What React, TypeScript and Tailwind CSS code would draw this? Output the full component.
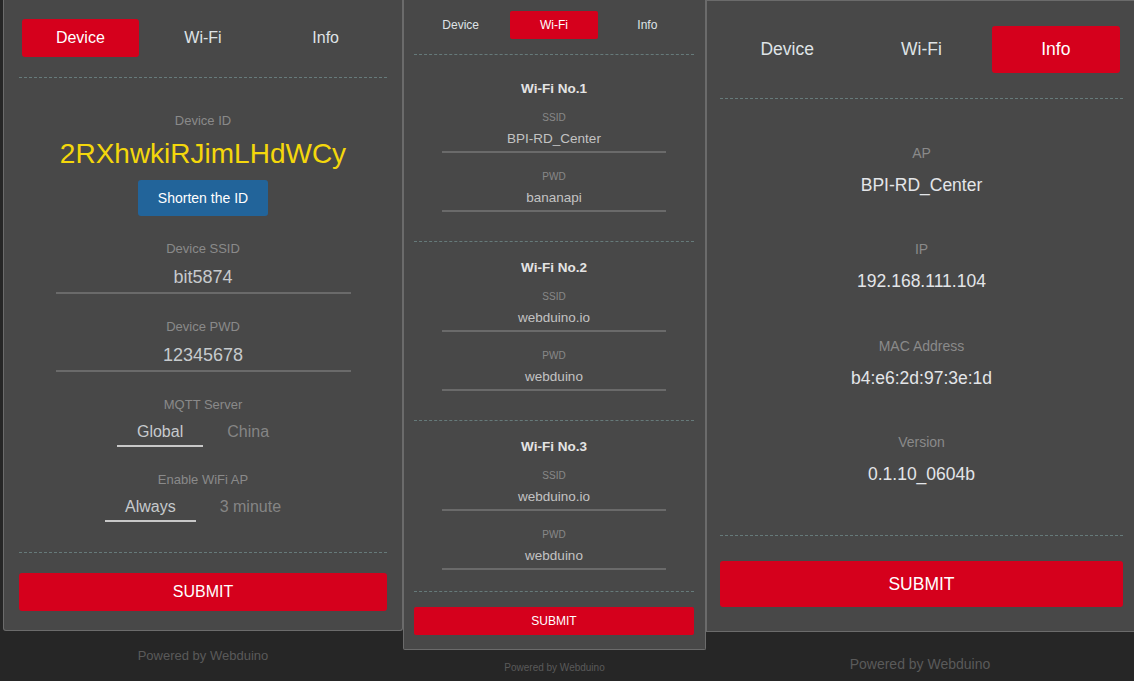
const tabs = ['Device', 'Wi-Fi', 'Info'];

function Sep({ className }: { className: string }) {
  return <div className={'w-full border-t border-dashed border-[#667a7a] ' + className} />;
}

function DevicePanel() {
  return (
    <div className="w-[403px] shrink-0 flex flex-col pl-[3px]">
      <div className="bg-[#484848] border-x border-b border-[#6b6b6b] rounded-b-[3px] px-[15px] pt-[19px] pb-[19px] flex flex-col items-center text-center">
        <div className="grid grid-cols-3 h-[38px] w-full">
          {tabs.map((t) => (
            <div key={t} className="px-[3px] h-full">
              <div
                className={
                  t === 'Device'
                    ? 'h-full flex items-center justify-center rounded-[3px] bg-[#d5001c] text-white text-[16px]'
                    : 'h-full flex items-center justify-center text-[#dfe3e6] text-[16px]'
                }
              >
                {t}
              </div>
            </div>
          ))}
        </div>
        <Sep className="mt-[20px]" />

        <div className="mt-[35px] text-[13px] leading-[15px] text-[#8a8a8a]">Device ID</div>
        <div className="mt-[10px] text-[28px] leading-[32px] text-[#f4d70c]">2RXhwkiRJimLHdWCy</div>
        <button className="mt-[10px] h-[36px] px-[20px] bg-[#22649a] rounded-[3px] text-white text-[14px]">
          Shorten the ID
        </button>

        <div className="mt-[25px] text-[13px] leading-[15px] text-[#8a8a8a]">Device SSID</div>
        <div className="mt-[10px] w-[295px] text-[18px] leading-[22px] pb-[4px] border-b-2 border-[#6a6a6a] text-[#c6cacd]">
          bit5874
        </div>

        <div className="mt-[25px] text-[13px] leading-[15px] text-[#8a8a8a]">Device PWD</div>
        <div className="mt-[10px] w-[295px] text-[18px] leading-[22px] pb-[4px] border-b-2 border-[#6a6a6a] text-[#c6cacd]">
          12345678
        </div>

        <div className="mt-[25px] text-[13px] leading-[15px] text-[#8a8a8a]">MQTT Server</div>
        <div className="mt-[10px] flex gap-[4px] text-[16px] leading-[19px]">
          <div className="px-[20px] pb-[4px] border-b-2 border-[#c8c8c8] text-[#c6cacd]">Global</div>
          <div className="px-[20px] pb-[4px] border-b-2 border-transparent text-[#858585]">China</div>
        </div>

        <div className="mt-[25px] text-[13px] leading-[15px] text-[#8a8a8a]">Enable WiFi AP</div>
        <div className="mt-[10px] flex gap-[4px] text-[16px] leading-[19px]">
          <div className="px-[20px] pb-[4px] border-b-2 border-[#c8c8c8] text-[#c6cacd]">Always</div>
          <div className="px-[20px] pb-[4px] border-b-2 border-transparent text-[#858585]">3 minute</div>
        </div>

        <Sep className="mt-[30px]" />
        <button className="mt-[20px] w-full h-[38px] rounded-[3px] bg-[#d5001c] text-white text-[16px]">SUBMIT</button>
      </div>
      <div className="pt-[17px] text-center text-[13px] leading-[15px] text-[#5a5a5a]">Powered by Webduino</div>
    </div>
  );
}

function WifiGroup({ n, ssid, pwd, first }: { n: number; ssid: string; pwd: string; first?: boolean }) {
  return (
    <div className={first ? 'pt-[26px] flex flex-col items-center' : 'pt-[18px] flex flex-col items-center'}>
      <div className="text-[13.5px] leading-[16px] font-bold text-[#e4e4e4]">Wi-Fi No.{n}</div>
      <div className="mt-[15px] text-[10px] leading-[12px] text-[#888888]">SSID</div>
      <div className="mt-[7px] w-[224px] text-[13.5px] leading-[16px] pb-[4px] border-b-2 border-[#6a6a6a] text-[#c3c3c3]">
        {ssid}
      </div>
      <div className="mt-[18px] text-[10px] leading-[12px] text-[#888888]">PWD</div>
      <div className="mt-[7px] w-[224px] text-[13.5px] leading-[16px] pb-[4px] border-b-2 border-[#6a6a6a] text-[#c3c3c3]">
        {pwd}
      </div>
    </div>
  );
}

function WifiPanel() {
  return (
    <div className="w-[303px] shrink-0 flex flex-col">
      <div className="bg-[#484848] border-x border-b border-[#6b6b6b] rounded-b-[2px] pl-[10px] pr-[11px] pt-[11px] pb-[14px] text-center">
        <div className="grid grid-cols-3 h-[28px] w-full">
          {tabs.map((t) => (
            <div key={t} className="px-[2.5px] h-full">
              <div
                className={
                  t === 'Wi-Fi'
                    ? 'h-full flex items-center justify-center rounded-[2px] bg-[#d5001c] text-white text-[12px]'
                    : 'h-full flex items-center justify-center text-[#dfe3e6] text-[12px]'
                }
              >
                {t}
              </div>
            </div>
          ))}
        </div>
        <Sep className="mt-[15px]" />
        <WifiGroup n={1} ssid="BPI-RD_Center" pwd="bananapi" first />
        <Sep className="mt-[29px]" />
        <WifiGroup n={2} ssid="webduino.io" pwd="webduino" />
        <Sep className="mt-[29px]" />
        <WifiGroup n={3} ssid="webduino.io" pwd="webduino" />
        <Sep className="mt-[21px]" />
        <button className="mt-[15px] w-full h-[28px] rounded-[2px] bg-[#d5001c] text-white text-[12px]">SUBMIT</button>
      </div>
      <div className="pt-[12px] text-center text-[10px] leading-[12px] text-[#5a5a5a]">Powered by Webduino</div>
    </div>
  );
}

const info = [
  { label: 'AP', value: 'BPI-RD_Center' },
  { label: 'IP', value: '192.168.111.104' },
  { label: 'MAC Address', value: 'b4:e6:2d:97:3e:1d' },
  { label: 'Version', value: '0.1.10_0604b' },
];

function InfoPanel() {
  return (
    <div className="flex-1 flex flex-col">
      <div className="bg-[#484848] border-l border-y border-[#6b6b6b] pl-[13px] pr-[11px] pt-[25px] pb-[24px] text-center">
        <div className="grid grid-cols-3 h-[47px] w-full">
          {tabs.map((t) => (
            <div key={t} className="px-[3px] h-full">
              <div
                className={
                  t === 'Info'
                    ? 'h-full flex items-center justify-center rounded-[3px] bg-[#d5001c] text-white text-[17.5px]'
                    : 'h-full flex items-center justify-center text-[#dfe3e6] text-[17.5px]'
                }
              >
                {t}
              </div>
            </div>
          ))}
        </div>
        <Sep className="mt-[25px]" />
        <div className="pt-[46px]">
          {info.map((row, i) => (
            <div key={row.label} className={i === 0 ? '' : 'mt-[46.33px]'}>
              <div className="text-[14px] leading-[16px] text-[#8a8a8a]">{row.label}</div>
              <div className="mt-[14px] text-[17.5px] leading-[20px] text-[#e3e5e8]">{row.value}</div>
            </div>
          ))}
        </div>
        <Sep className="mt-[51px]" />
        <button className="mt-[25px] w-full h-[46px] rounded-[3px] bg-[#d5001c] text-white text-[17.5px]">SUBMIT</button>
      </div>
      <div className="pt-[24px] text-center text-[14px] leading-[16px] text-[#5a5a5a]">Powered by Webduino</div>
    </div>
  );
}

export default function App() {
  return (
    <div className="flex w-[1134px] h-[681px] overflow-hidden bg-[#262626] font-['Liberation_Sans',Arial,sans-serif]">
      <DevicePanel />
      <WifiPanel />
      <InfoPanel />
    </div>
  );
}
